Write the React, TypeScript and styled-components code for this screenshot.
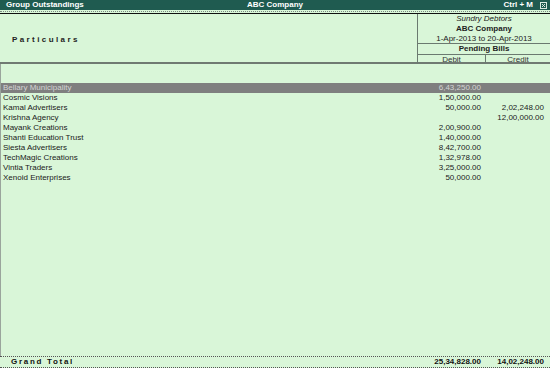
import styled, { createGlobalStyle } from "styled-components";

const rows = [
  { name: "Bellary Municipality", debit: "6,43,250.00", credit: "" },
  { name: "Cosmic Visions", debit: "1,50,000.00", credit: "" },
  { name: "Kamal Advertisers", debit: "50,000.00", credit: "2,02,248.00" },
  { name: "Krishna Agency", debit: "", credit: "12,00,000.00" },
  { name: "Mayank Creations", debit: "2,00,900.00", credit: "" },
  { name: "Shanti Education Trust", debit: "1,40,000.00", credit: "" },
  { name: "Siesta Advertisers", debit: "8,42,700.00", credit: "" },
  { name: "TechMagic Creations", debit: "1,32,978.00", credit: "" },
  { name: "Vintia Traders", debit: "3,25,000.00", credit: "" },
  { name: "Xenoid Enterprises", debit: "50,000.00", credit: "" },
];

export default function App() {
  return (
    <>
      <GlobalStyle />
      <Window>
        <TitleBar>
          <TitleLeft>Group Outstandings</TitleLeft>
          <TitleCenter>ABC Company</TitleCenter>
          <TitleRight>
            <span>Ctrl + M</span>
            <CloseBox>
              <svg width="7" height="7" viewBox="0 0 7 7">
                <rect x="0.5" y="0.5" width="6" height="6" fill="none" stroke="#d8e8e0" />
                <path d="M2 2 L5 5 M5 2 L2 5" stroke="#d8e8e0" strokeWidth="1" />
              </svg>
            </CloseBox>
          </TitleRight>
        </TitleBar>
        <DottedRule />

        <Header>
          <ParticularsHead>Particulars</ParticularsHead>
          <ColumnHead>
            <HeadLine $italic>Sundry Debtors</HeadLine>
            <HeadLine $bold>ABC Company</HeadLine>
            <HeadLine>1-Apr-2013 to 20-Apr-2013</HeadLine>
            <HeadBand $bold>Pending Bills</HeadBand>
            <SubHeads>
              <SubHead>Debit</SubHead>
              <SubHead $last>Credit</SubHead>
            </SubHeads>
          </ColumnHead>
        </Header>

        <Body>
          {rows.map((r, i) => (
            <Row key={r.name} $selected={i === 0}>
              <Name>{r.name}</Name>
              <Amount>{r.debit}</Amount>
              <Amount $credit>{r.credit}</Amount>
            </Row>
          ))}
        </Body>

        <Footer>
          <TotalLabel>Grand Total</TotalLabel>
          <Amount $bold>25,34,828.00</Amount>
          <Amount $bold $credit>14,02,248.00</Amount>
        </Footer>
      </Window>
    </>
  );
}

const GlobalStyle = createGlobalStyle`
  html, body {
    margin: 0;
    padding: 0;
    background: #d9f6d8;
  }
  body {
    font-family: "Liberation Sans", Arial, sans-serif;
    font-size: 8px;
    color: #1a1a1a;
  }
`;

const Window = styled.div`
  width: 550px;
  height: 368px;
  display: flex;
  flex-direction: column;
  background: #d9f6d8;
  overflow: hidden;
`;

const TitleBar = styled.div`
  height: 10px;
  display: grid;
  grid-template-columns: 1fr auto 1fr;
  align-items: center;
  background: #1f5b50;
  color: #ffffff;
  font-weight: bold;
  font-size: 8px;
  line-height: 10px;
`;

const TitleLeft = styled.div`
  padding-left: 6px;
`;

const TitleCenter = styled.div`
  text-align: center;
`;

const TitleRight = styled.div`
  display: flex;
  justify-content: flex-end;
  align-items: center;
  gap: 7px;
  padding-right: 3px;
`;

const CloseBox = styled.span`
  display: flex;
  align-items: center;
`;

const DottedRule = styled.div`
  height: 1px;
  margin-top: 1px;
  border-top: 1px dotted #7a8a80;
`;

const Header = styled.div`
  height: 48px;
  display: grid;
  grid-template-columns: 1fr 133px;
  border-top: 1px solid #101010;
  border-bottom: 2px solid #707a72;
`;

const ParticularsHead = styled.div`
  display: flex;
  align-items: center;
  padding-left: 12px;
  font-weight: bold;
  letter-spacing: 2.4px;
  color: #222;
`;

const ColumnHead = styled.div`
  display: flex;
  flex-direction: column;
  border-left: 1px solid #6b7a70;
  padding-top: 0px;
`;

const HeadLine = styled.div<{ $italic?: boolean; $bold?: boolean }>`
  height: 10px;
  line-height: 10px;
  text-align: center;
  font-style: ${(p) => (p.$italic ? "italic" : "normal")};
  font-weight: ${(p) => (p.$bold ? "bold" : "normal")};
  color: #222;
`;

const HeadBand = styled(HeadLine)`
  border-top: 1px solid #6b7a70;
  border-bottom: 1px solid #6b7a70;
  margin-top: -1px;
`;

const SubHeads = styled.div`
  flex: 1;
  display: grid;
  grid-template-columns: 67px 1fr;
`;

const SubHead = styled.div<{ $last?: boolean }>`
  text-align: center;
  line-height: 9px;
  color: #333;
  border-left: ${(p) => (p.$last ? "1px solid #6b7a70" : "none")};
`;

const Body = styled.div`
  flex: 1;
  padding-top: 19px;
  border-left: 1px solid #9aa59c;
`;

const Row = styled.div<{ $selected?: boolean }>`
  height: 10px;
  line-height: 10px;
  display: grid;
  grid-template-columns: 1fr 67px 66px;
  background: ${(p) => (p.$selected ? "#7f7f7f" : "transparent")};
  color: ${(p) => (p.$selected ? "#d4d4d4" : "#1a1a1a")};
`;

const Name = styled.div`
  padding-left: 2px;
  white-space: nowrap;
`;

const Amount = styled.div<{ $credit?: boolean; $bold?: boolean }>`
  text-align: right;
  padding-right: ${(p) => (p.$credit ? "6px" : "3px")};
  font-weight: ${(p) => (p.$bold ? "bold" : "normal")};
  white-space: nowrap;
`;

const Footer = styled.div`
  height: 10px;
  line-height: 10px;
  display: grid;
  grid-template-columns: 1fr 67px 66px;
  border-top: 1px dotted #555;
  border-bottom: 1px dotted #555;
  color: #111;
`;

const TotalLabel = styled.div`
  padding-left: 11px;
  font-weight: bold;
  letter-spacing: 1.7px;
`;
